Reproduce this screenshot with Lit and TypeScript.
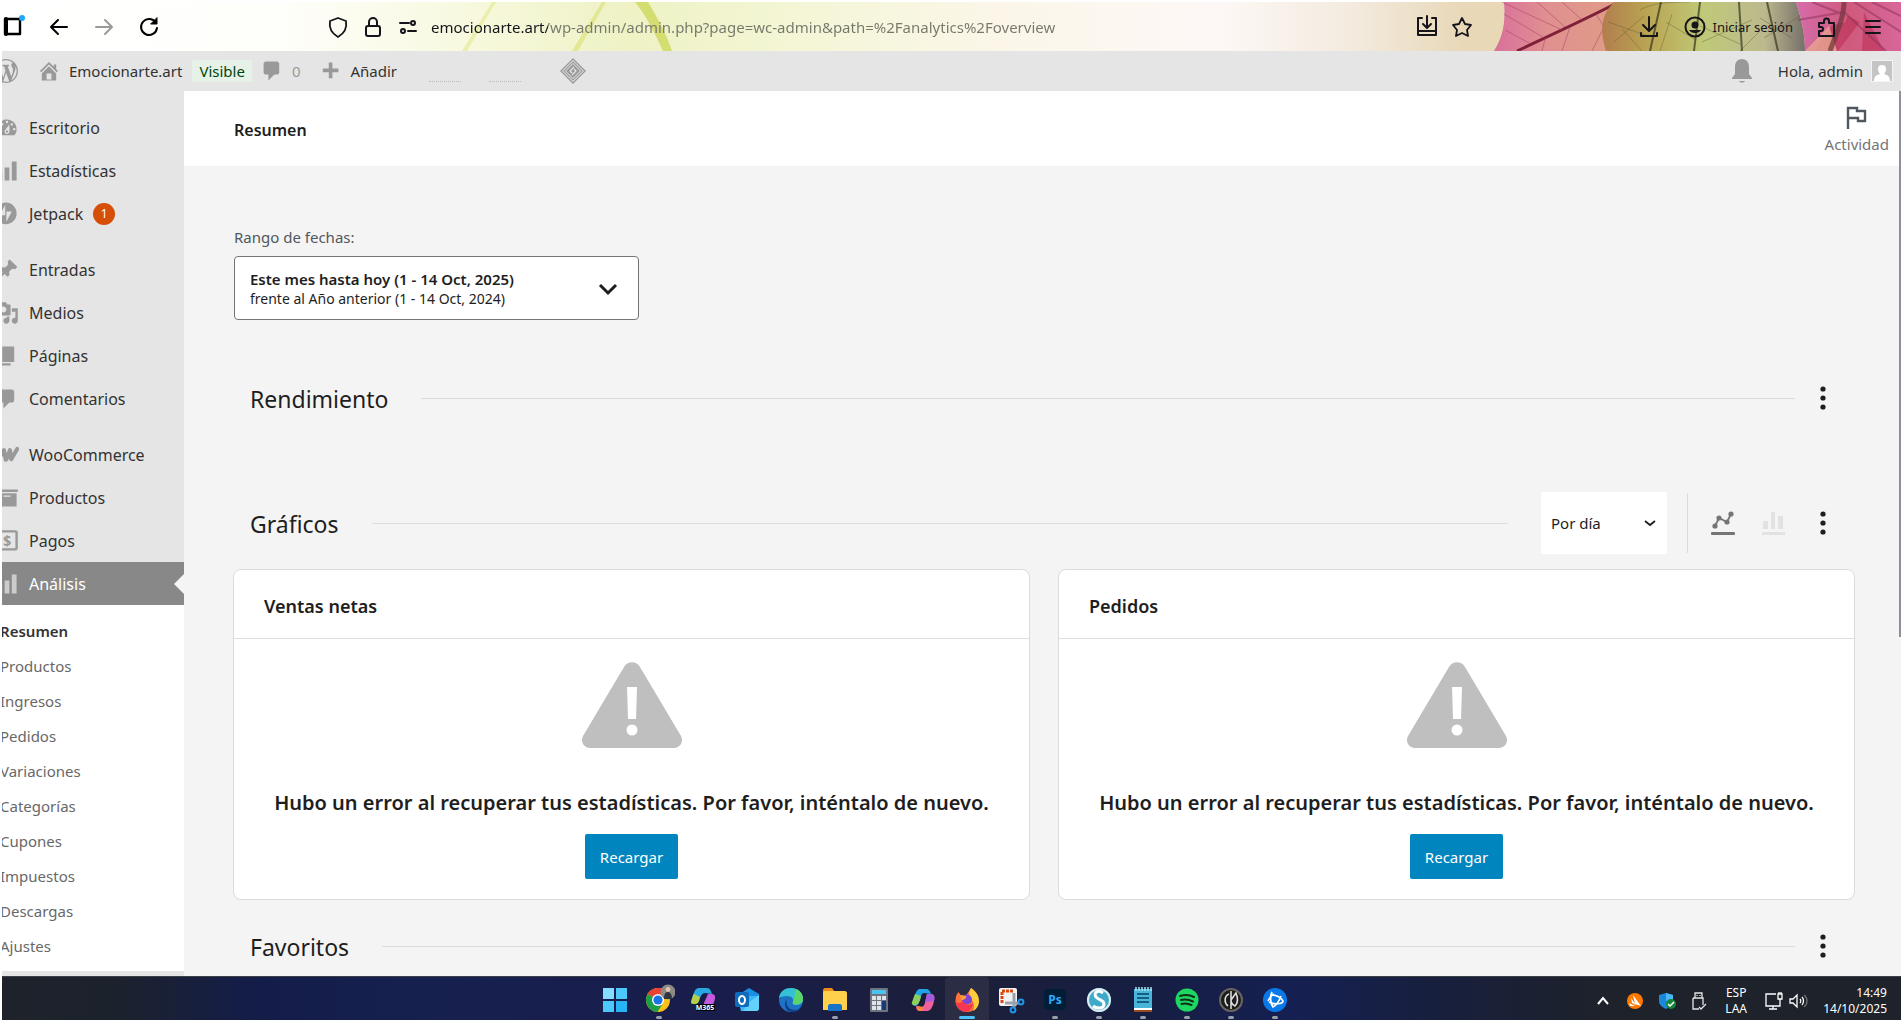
import { LitElement, html, svg, css } from 'lit';
import { customElement, property } from 'lit/decorators.js';
import { classMap } from 'lit/directives/class-map.js';

const base = css`
  * {
    box-sizing: border-box;
  }
  h1, h2, h3, p, ul {
    margin: 0;
    padding: 0;
    font-weight: 400;
  }
  ul {
    list-style: none;
  }
  button {
    border: none;
    background: none;
    padding: 0;
    font: inherit;
    color: inherit;
    cursor: pointer;
  }
  a {
    color: inherit;
    text-decoration: none;
  }
  svg {
    display: block;
    flex: none;
  }
`;

// 20x20 glyphs used by the admin bar and the side menu
const glyphs = {
  wordpress: svg`<path d="M20 10c0-5.51-4.49-10-10-10C4.48 0 0 4.49 0 10c0 5.52 4.48 10 10 10 5.51 0 10-4.48 10-10zM7.78 15.37L4.37 6.22c.55-.02 1.17-.08 1.17-.08.5-.06.44-1.13-.06-1.11 0 0-1.45.11-2.37.11-.18 0-.37 0-.58-.01C4.12 2.69 6.87 1.11 10 1.11c2.33 0 4.45.87 6.05 2.34-.68-.11-1.65.39-1.65 1.58 0 .74.45 1.36.9 2.1.35.61.55 1.36.55 2.46 0 1.49-1.4 5-1.4 5l-3.03-8.37c.54-.02.82-.17.82-.17.5-.05.44-1.25-.06-1.22 0 0-1.44.12-2.38.12-.87 0-2.33-.12-2.33-.12-.5-.03-.56 1.2-.06 1.22l.92.08 1.26 3.41zM17.41 10c.24-.64.74-1.87.43-4.25.7 1.29 1.05 2.71 1.05 4.25 0 3.29-1.73 6.24-4.4 7.78.97-2.59 1.94-5.2 2.92-7.78zM6.1 18.09C3.12 16.65 1.11 13.53 1.11 10c0-1.3.23-2.48.72-3.59C3.25 10.3 4.67 14.2 6.1 18.09zm4.03-6.63l2.58 6.98c-.86.29-1.76.45-2.71.45-.79 0-1.57-.11-2.29-.33.81-2.38 1.62-4.74 2.42-7.1z"/>`,
  home: svg`<path d="M16 8.5l1.53 1.53-1.06 1.06L10 4.6l-6.47 6.49-1.06-1.06L10 2.5l4 4v-2h2v4zm-6-2.46l6 5.99V18H4v-5.97zM12 17v-5H8v5h4z" fill-rule="evenodd"/>`,
  plus: svg`<path d="M17 8v3h-5v5H9v-5H4V8h5V3h3v5h5z"/>`,
  dashboard: svg`<path fill-rule="evenodd" d="M3.76 16h12.48c1.1-1.37 1.76-3.11 1.76-5 0-4.42-3.58-8-8-8s-8 3.58-8 8c0 1.89.66 3.63 1.76 5zM10 4c.55 0 1 .45 1 1s-.45 1-1 1-1-.45-1-1 .45-1 1-1zM6 6c.55 0 1 .45 1 1s-.45 1-1 1-1-.45-1-1 .45-1 1-1zm8 0c.55 0 1 .45 1 1s-.45 1-1 1-1-.45-1-1 .45-1 1-1zm-5.37 5.55L12 7v6c0 1.1-.9 2-2 2s-2-.9-2-2c0-.57.24-1.08.63-1.45zM4 10c.55 0 1 .45 1 1s-.45 1-1 1-1-.45-1-1 .45-1 1-1zm12 0c.55 0 1 .45 1 1s-.45 1-1 1-1-.45-1-1 .45-1 1-1zm-5 3c0-.55-.45-1-1-1s-1 .45-1 1 .45 1 1 1 1-.45 1-1z"/>`,
  stats: svg`<path d="M18 18V2h-4v16h4zm-6 0V7H8v11h4zm-6 0v-8H2v8h4z"/>`,
  jetpack: svg`<path fill-rule="evenodd" d="M9 0.500a9 9 0 1 0 0 18a9 9 0 0 0 0-18zM8.500 2.500V11H4zM9.500 16.500V8H14z"/>`,
  pin: svg`<path d="M10.44 3.02l1.82-1.82 6.36 6.35-1.83 1.82c-1.05-.68-2.48-.57-3.41.36l-.75.75c-.92.93-1.04 2.35-.35 3.41l-1.83 1.82-2.41-2.41-2.8 2.79c-.42.42-3.38 2.71-3.8 2.29s1.86-3.39 2.28-3.81l2.79-2.79L4.1 9.36l1.83-1.82c1.05.69 2.48.57 3.4-.36l.75-.75c.93-.92 1.05-2.35.36-3.41z"/>`,
  media: svg`<path fill-rule="evenodd" d="M13 11V4c0-.55-.45-1-1-1h-1.67L9 1H5L3.67 3H2c-.55 0-1 .45-1 1v7c0 .55.45 1 1 1h10c.55 0 1-.45 1-1zM7 4.5c1.38 0 2.5 1.12 2.5 2.5S8.38 9.5 7 9.5 4.5 8.38 4.5 7 5.62 4.5 7 4.5zM14 6h5v10.5c0 1.38-1.12 2.5-2.5 2.5S14 17.88 14 16.5s1.12-2.5 2.5-2.5c.17 0 .34.02.5.05V9h-3V6zm-4 8.05V13h2v3.5c0 1.38-1.12 2.5-2.5 2.5S7 17.88 7 16.5 8.12 14 9.5 14c.17 0 .34.02.5.05z"/>`,
  page: svg`<path d="M6 15V2h10v13H6zm-1 1h8v2H3V5h2v11z"/>`,
  comment: svg`<path d="M5 2h9c1.1 0 2 .9 2 2v7c0 1.1-.9 2-2 2h-2l-5 5v-5H5c-1.1 0-2-.9-2-2V4c0-1.1.9-2 2-2z"/>`,
  woo: svg`<path fill="none" stroke="currentColor" stroke-width="3.400" stroke-linecap="round" stroke-linejoin="round" d="M1 6l1.500 8L7.500 6l1.500 8M9.500 13.500L12.500 6l1 7.500L18.500 5"/>`,
  archive: svg`<path fill-rule="evenodd" d="M19 3v2H1V3h18zM2 6h16v11H2V6zm11 3V8H7v1h6z"/>`,
  money: svg`<rect x="-1" y="2" width="19" height="15" rx="1" fill="none" stroke="currentColor" stroke-width="2"/><text x="10" y="14" text-anchor="middle" font-size="12" font-weight="700">$</text>`,
};

const glyph = (name: string, size = 24) => html`
  <svg width=${size} height=${size} viewBox="0 0 20 20" fill="currentColor" aria-hidden="true">${glyphs[name]}</svg>
`;

@customElement('browser-bar')
class BrowserBar extends LitElement {
  static styles = [base, css`
    :host {
      display: flex;
      position: relative;
      align-items: center;
      height: 49px;
      flex: none;
      padding-right: 16px;
      color: #15141a;
      font-size: 13px;
    }
    .theme {
      position: absolute;
      inset: 0;
      width: 100%;
      height: 100%;
      z-index: -1;
    }
    .nav {
      display: flex;
      align-items: center;
      gap: 21px;
      flex: none;
      width: 324px;
    }
    .address {
      display: flex;
      align-items: center;
      gap: 11px;
      flex: 1;
    }
    .url {
      flex: 1;
      min-width: 0;
      border: none;
      outline: none;
      padding: 0;
      font: inherit;
      font-size: 15px;
      line-height: 24px;
      color: transparent;
      background: linear-gradient(to right, #15141a 117px, #77776c 117px);
      background-clip: text;
      -webkit-background-clip: text;
    }
    .actions {
      display: flex;
      align-items: center;
      gap: 11px;
      margin-right: 163px;
    }
    .tools {
      display: flex;
      align-items: center;
      gap: 22px;
    }
    .account {
      display: flex;
      align-items: center;
      gap: 6px;
      white-space: nowrap;
    }
  `];

  icon(body, stroke = '#15141a') {
    return html`<svg width="24" height="24" viewBox="0 0 24 24" fill="none" stroke=${stroke} stroke-width="2" stroke-linecap="round" stroke-linejoin="round">${body}</svg>`;
  }

  render() {
    return html`
      <svg class="theme" viewBox="0 0 1899 49" preserveAspectRatio="none" aria-hidden="true">
        <defs>
          <linearGradient id="sky">
            <stop offset="0" stop-color="#fff"/>
            <stop offset=".15" stop-color="#fefefa"/>
            <stop offset=".24" stop-color="#f8f9e0"/>
            <stop offset=".33" stop-color="#eef2c4"/>
            <stop offset=".42" stop-color="#f4f6d6"/>
            <stop offset=".52" stop-color="#fbf6e8"/>
            <stop offset=".64" stop-color="#fdf8f6"/>
            <stop offset=".71" stop-color="#f4ebdf"/>
            <stop offset=".77" stop-color="#e8d8b8"/>
            <stop offset="1" stop-color="#e8d8a0"/>
          </linearGradient>
          <linearGradient id="rose">
            <stop offset="0" stop-color="#d9709c"/>
            <stop offset=".35" stop-color="#e09090"/>
            <stop offset="1" stop-color="#dfa182"/>
          </linearGradient>
          <linearGradient id="moss">
            <stop offset="0" stop-color="#b27d4e"/>
            <stop offset=".22" stop-color="#b9a452"/>
            <stop offset=".5" stop-color="#c0c978"/>
            <stop offset=".8" stop-color="#bcb98e"/>
            <stop offset="1" stop-color="#77706a"/>
          </linearGradient>
          <linearGradient id="pink">
            <stop offset="0" stop-color="#d56cab"/>
            <stop offset=".5" stop-color="#cf5a7c"/>
            <stop offset="1" stop-color="#d8669a"/>
          </linearGradient>
        </defs>
        <rect width="1899" height="49" fill="url(#sky)"/>
        <path d="M633 0c14 18 20 32 28 49h9c-6-18-14-32-24-49z" fill="#c9d44c" opacity=".7"/>
        <path d="M600 0l-30 49h6l28-49z" fill="#d3db5c" opacity=".5"/>
        <path d="M490 0l-30 49h5l29-49z" fill="#dfe67c" opacity=".5"/>
        <path d="M1502 0c2 22-2 36-10 49h130l20-49z" fill="url(#rose)"/>
        <path d="M1617 0c-35 18-70 34-102 49" fill="none" stroke="#7e2138" stroke-width="3"/>
        <path d="M1502 12l42 25M1503 28l24 13M1560 0l20 18M1535 0l28 25M1590 49l20-40M1560 49l8-24M1540 49l3-12M1594 12l20 32M1500 0l60 28" fill="none" stroke="#a83c6e" stroke-width="1" opacity=".5"/>
        <path d="M1612 0c-14 14-14 30-8 49h199c0-18-4-34-9-49z" fill="url(#moss)"/>
        <path d="M1638 8c10-6 24-8 50-8M1606 20l40 14M1612 40l30-26M1670 12l-12 37M1664 20l30 18M1698 24l40 18M1758 16l32 20M1762 36l36-22M1738 49l20-20M1700 40l50-22M1640 49l-20-22" fill="none" stroke="#5c5a30" stroke-width="1" opacity=".4"/>
        <path d="M1659 0l-11 49M1698 0l-6 49M1737 0l3 49M1765 0l11 49" fill="none" stroke="#36351e" stroke-width="2" opacity=".7"/>
        <path d="M1794 0c5 15 9 31 9 49h96V0z" fill="url(#pink)"/>
        <path d="M1812 49l18-26 20-4-18 30zM1862 10l20 39h-22zM1846 14l12 6-22 29h-8z" fill="#b8264c" opacity=".5"/>
        <path d="M1803 49l24-25 8 25z" fill="#e7a690" opacity=".8"/>
        <path d="M1842 0c0 16-8 32-14 49" fill="none" stroke="#6e3538" stroke-width="5" opacity=".7"/>
        <path d="M1796 18l46-8 42 39M1852 0l47 30M1870 0l29 14M1810 0l30 12" fill="none" stroke="#883058" stroke-width="2" opacity=".5"/>
      </svg>

      <div class="nav">
        <button aria-label="Barra lateral">${this.icon(svg`<path d="M3 4h15v15H3z" stroke-width="2.400"/><path d="M4 4v15" stroke-width="4"/><circle cx="20" cy="3" r="3" fill="#1fa8f5" stroke="none"/>`, '#000')}</button>
        <button aria-label="Atrás">${this.icon(svg`<path d="M20 12H4M11 5l-7 7 7 7"/>`, '#000')}</button>
        <button aria-label="Adelante">${this.icon(svg`<path d="M4 12h16M13 5l7 7-7 7"/>`, '#9a9a9a')}</button>
        <button aria-label="Recargar página">${this.icon(svg`<path d="M19 8a8 8 0 1 0 1 5"/><path d="M20 3v6h-6z" fill="#000" stroke-width="1"/>`, '#000')}</button>
      </div>

      <div class="address">
        ${this.icon(svg`<path d="M12 3l8 3c1 6-1 12-8 16C5 18 3 12 4 6z" stroke-width="1.800"/>`)}
        ${this.icon(svg`<rect x="5" y="11" width="14" height="10" rx="2"/><path d="M8 11V7a4 4 0 0 1 8 0v4"/>`)}
        ${this.icon(svg`<path d="M4 8h9M12 16h8"/><circle cx="17" cy="8" r="2"/><circle cx="7" cy="16" r="2"/>`)}
        <input class="url" aria-label="Dirección" .value=${'emocionarte.art/wp-admin/admin.php?page=wc-admin&path=%2Fanalytics%2Foverview'}>
      </div>

      <div class="actions">
        <button aria-label="Instalar">${this.icon(svg`<path d="M7 3H3v17h18V3h-4M3 16h18M12 1v11M8 9l4 4 4-4"/>`)}</button>
        <button aria-label="Marcador">${this.icon(svg`<path d="M12 3l3 6 6 1-4 5 1 6-6-3-6 3 1-6-4-5 6-1z" stroke-width="1.800"/>`)}</button>
      </div>

      <div class="tools">
        <button aria-label="Descargas">${this.icon(svg`<path d="M12 2v13M6 10l6 6 6-6M4 18v3h16v-3"/>`)}</button>
        <button class="account">
          ${this.icon(svg`<circle cx="12" cy="12" r="9.500"/><circle cx="12" cy="10" r="3.500" fill="#15141a" stroke="none"/><path d="M6 15h12c-2 4-10 4-12 0z" fill="#15141a" stroke="none"/>`)}
          Iniciar sesión
        </button>
        <button aria-label="Extensiones">${this.icon(svg`<path d="M4 21v-5h2a2 2 0 0 0 0-4H4V8h5V6a2 2 0 0 1 5 0v2h5v13z"/>`)}</button>
        <button aria-label="Menú">${this.icon(svg`<path d="M5 6h14M5 12h14M5 18h14"/>`)}</button>
      </div>
    `;
  }
}

@customElement('admin-bar')
class AdminBar extends LitElement {
  static styles = [base, css`
    :host {
      display: flex;
      align-items: center;
      height: 40px;
      flex: none;
      padding-right: 8px;
      background: #e5e5e5;
      color: #333;
      font-size: 15px;
      white-space: nowrap;
      overflow: hidden;
    }
    .glyph {
      color: #999;
    }
    .logo {
      margin-left: -8px;
      margin-right: 19px;
    }
    .item {
      display: flex;
      align-items: center;
      gap: 8px;
    }
    .badge {
      margin: 0 8px 0 10px;
      padding: 0 7px;
      border-radius: 2px;
      background: #e6f2e8;
      color: #00450c;
      line-height: 22px;
    }
    .count {
      color: #999;
    }
    .add {
      margin-left: 18px;
    }
    .dots {
      display: flex;
      gap: 28px;
      margin-left: 32px;
      padding-top: 20px;
    }
    .dot-row {
      width: 32px;
      border-top: 1px dotted #bbb;
    }
    .diamond {
      margin-left: 39px;
    }
    .right {
      display: flex;
      align-items: center;
      gap: 8px;
      margin-left: auto;
    }
    .bell {
      margin-right: 16px;
    }
  `];

  render() {
    return html`
      <a class="glyph logo" href="#" aria-label="WordPress">${glyph('wordpress')}</a>
      <a class="item" href="#"><span class="glyph">${glyph('home')}</span>Emocionarte.art</a>
      <span class="badge">Visible</span>
      <a class="item" href="#"><span class="glyph">${glyph('comment')}</span><span class="count">0</span></a>
      <a class="item add" href="#"><span class="glyph">${glyph('plus')}</span>Añadir</a>
      <span class="dots"><i class="dot-row"></i><i class="dot-row"></i></span>
      <a class="diamond" href="#" aria-label="Caché">
        <svg width="26" height="26" viewBox="0 0 26 26" fill="none" stroke="#999">
          <path d="M13 1l12 12-12 12L1 13z" stroke-width="1.400"/>
          <path d="M13 4l9 9-9 9-9-9z" stroke-width="1.200"/>
          <path d="M13 6l7 7-7 7-7-7z" fill="#999" stroke="none"/>
          <path d="M14 9l-4 4 2 2M12 17l4-4-2-2" stroke="#e5e5e5" stroke-width="1.200"/>
        </svg>
      </a>
      <div class="right">
        <button class="bell" aria-label="Notificaciones">
          <svg width="24" height="26" viewBox="0 0 24 26" fill="#999">
            <path d="M12 1c5 0 7 4 7 8v7l3 4v1H2v-1l3-4V9c0-4 2-8 7-8zM9 23h6c-1 2-5 2-6 0z"/>
          </svg>
        </button>
        Hola, admin
        <svg width="22" height="22" viewBox="0 0 22 22">
          <path d="M0 0h22v22H0z" fill="#f4f4f4"/>
          <path d="M1 1h20v20H1z" fill="#c4c4c4"/>
          <path d="M11 5a4 4 0 0 1 4 4c0 2-1 4-2 5 3 1 6 2 6 7H3c0-5 3-6 6-7-1-1-2-3-2-5a4 4 0 0 1 4-4z" fill="#fff"/>
        </svg>
      </div>
    `;
  }
}

@customElement('admin-menu')
class AdminMenu extends LitElement {
  static styles = [base, css`
    :host {
      display: block;
      flex: none;
      width: 199px;
      margin-left: -17px;
      padding-top: 15px;
      background: #e5e5e5;
      color: #333;
      font-size: 16px;
    }
    .group {
      margin-bottom: 13px;
    }
    .group.last {
      margin-bottom: 0;
    }
    .link {
      display: flex;
      align-items: center;
      gap: 10px;
      height: 43px;
      padding-left: 10px;
    }
    .glyph {
      color: #999;
    }
    .current {
      background: #888;
      color: #fff;
    }
    .current .glyph {
      color: #ccc;
    }
    .current::after {
      content: '';
      margin-left: auto;
      border: 10px solid transparent;
      border-left-width: 0;
      border-right-color: #f4f4f4;
    }
    .count {
      width: 22px;
      border-radius: 11px;
      background: #d64e07;
      color: #fff;
      font-size: 12px;
      line-height: 22px;
      text-align: center;
    }
    .sub {
      padding: 9px 0 7px 15px;
      background: #fff;
      color: #686868;
      font-size: 15px;
      line-height: 35px;
    }
    .sub .active {
      color: #333;
      font-weight: 600;
    }
  `];

  groups = [
    [
      { icon: 'dashboard', label: 'Escritorio' },
      { icon: 'stats', label: 'Estadísticas' },
      { icon: 'jetpack', label: 'Jetpack', count: 1 },
    ],
    [
      { icon: 'pin', label: 'Entradas' },
      { icon: 'media', label: 'Medios' },
      { icon: 'page', label: 'Páginas' },
      { icon: 'comment', label: 'Comentarios' },
    ],
    [
      { icon: 'woo', label: 'WooCommerce' },
      { icon: 'archive', label: 'Productos' },
      { icon: 'money', label: 'Pagos' },
      { icon: 'stats', label: 'Análisis', current: true },
    ],
  ];

  submenu = ['Resumen', 'Productos', 'Ingresos', 'Pedidos', 'Variaciones', 'Categorías', 'Cupones', 'Impuestos', 'Descargas', 'Ajustes'];

  render() {
    return html`
      ${this.groups.map((group: any[], i) => html`
        <ul class=${classMap({ group: true, last: i === this.groups.length - 1 })}>
          ${group.map(item => html`
            <li>
              <a class=${classMap({ link: true, current: !!item.current })} href="#">
                <span class="glyph">${glyph(item.icon)}</span>
                ${item.label}
                ${item.count ? html`<span class="count">${item.count}</span>` : ''}
              </a>
            </li>
          `)}
        </ul>
      `)}
      <ul class="sub">
        ${this.submenu.map((label, i) => html`<li><a class=${i === 0 ? 'active' : ''} href="#">${label}</a></li>`)}
      </ul>
    `;
  }
}

@customElement('chart-card')
class ChartCard extends LitElement {
  static styles = [base, css`
    :host {
      display: block;
      border: 1px solid #dcdcdc;
      border-radius: 8px;
      background: #fff;
      color: #1e1e1e;
    }
    .title {
      padding: 24px 30px 20px;
      border-bottom: 1px solid #e0e0e0;
      font-size: 18px;
      font-weight: 600;
      line-height: 24px;
    }
    .body {
      display: flex;
      flex-direction: column;
      align-items: center;
      padding: 23px 20px 20px;
    }
    .message {
      margin: 41px 0 17px;
      font-size: 20px;
      font-weight: 600;
      line-height: 28px;
      text-align: center;
    }
    .reload {
      height: 45px;
      padding: 0 15px;
      border-radius: 2px;
      background: #0085be;
      color: #fff;
      font-size: 15px;
    }
  `];

  @property() label = '';

  render() {
    return html`
      <h3 class="title">${this.label}</h3>
      <div class="body">
        <svg width="100" height="86" viewBox="0 0 100 86" aria-hidden="true">
          <path d="M42 5c3-6.500 13-6.500 16 0l41 69c3 6-1 12-8 12H9c-7 0-11-6-8-12z" fill="#bfbfbf"/>
          <path d="M45 25h10l-1 32h-8z" fill="#fff"/>
          <circle cx="50" cy="68" r="5.500" fill="#fff"/>
        </svg>
        <p class="message">Hubo un error al recuperar tus estadísticas. Por favor, inténtalo de nuevo.</p>
        <button class="reload">Recargar</button>
      </div>
    `;
  }
}

@customElement('overview-page')
class OverviewPage extends LitElement {
  static styles = [base, css`
    :host {
      display: block;
      position: relative;
      flex: 1;
      min-width: 0;
      overflow: hidden;
      background: #f4f4f4;
      color: #1e1e1e;
    }
    .header {
      display: flex;
      align-items: center;
      justify-content: space-between;
      height: 75px;
      padding: 2px 12px 0 50px;
      background: #fff;
    }
    .header h1 {
      font-size: 16px;
      font-weight: 600;
    }
    .activity {
      display: flex;
      flex-direction: column;
      align-items: center;
      gap: 4px;
      color: #757575;
      font-size: 15px;
      line-height: 22px;
    }
    .content {
      padding: 59px 46px 0 49px;
    }
    .filter {
      padding-left: 1px;
    }
    .filter-label {
      margin-bottom: 7px;
      color: #50575e;
      font-size: 15px;
      line-height: 24px;
    }
    .range {
      display: flex;
      align-items: center;
      justify-content: space-between;
      width: 405px;
      height: 64px;
      padding: 2px 18px 0 15px;
      border: 1px solid #757575;
      border-radius: 4px;
      background: #fff;
      font-size: 14px;
      line-height: 20px;
      text-align: left;
    }
    .range strong {
      display: block;
      font-size: 15px;
      font-weight: 600;
    }
    .section {
      display: flex;
      align-items: center;
      height: 62px;
      padding: 0 7px 0 17px;
    }
    .section h2 {
      padding-top: 2px;
      font-size: 23px;
      line-height: 32px;
    }
    .section hr {
      flex: 1;
      height: 1px;
      margin: 0 3px 0 33px;
      border: none;
      background: #dcdcdc;
    }
    .performance {
      margin-top: 47px;
    }
    .charts {
      margin-top: 63px;
    }
    .charts hr {
      margin-right: 33px;
    }
    .interval {
      display: grid;
      align-items: center;
      width: 126px;
      height: 62px;
      margin-right: 20px;
    }
    .interval > * {
      grid-area: 1 / 1;
    }
    .interval select {
      height: 100%;
      padding: 0 10px;
      border: none;
      border-radius: 2px;
      appearance: none;
      background: #fff;
      color: inherit;
      font: inherit;
      font-size: 15px;
    }
    .interval svg {
      justify-self: end;
      margin-right: 11px;
      pointer-events: none;
    }
    .types {
      display: flex;
      align-items: center;
      height: 60px;
      padding-left: 10px;
      border-left: 1px solid #dcdcdc;
    }
    .icon-button {
      display: flex;
      justify-content: center;
      width: 50px;
    }
    .cards {
      display: grid;
      grid-template-columns: 1fr 1fr;
      gap: 28px;
      margin: 15px 0;
    }
    .scrollbar {
      position: absolute;
      right: 0;
      top: 0;
      width: 2px;
      height: 546px;
      background: #8f8f9a;
    }
  `];

  menuButton(label: string) {
    return html`
      <button class="icon-button" aria-label=${label}>
        <svg width="24" height="24" viewBox="0 0 24 24" fill="#1e1e1e">
          <circle cx="12" cy="3" r="2.600"/><circle cx="12" cy="12" r="2.600"/><circle cx="12" cy="21" r="2.600"/>
        </svg>
      </button>
    `;
  }

  render() {
    return html`
      <header class="header">
        <h1>Resumen</h1>
        <button class="activity">
          <svg width="22" height="24" viewBox="0 0 22 24" fill="none" stroke="#50575e" stroke-width="2.400">
            <path d="M2 24V3h9v3h8v10h-7v-3H2"/>
          </svg>
          Actividad
        </button>
      </header>

      <div class="content">
        <div class="filter">
          <p class="filter-label" id="range-label">Rango de fechas:</p>
          <button class="range" aria-describedby="range-label">
            <span>
              <strong>Este mes hasta hoy (1 - 14 Oct, 2025)</strong>
              frente al Año anterior (1 - 14 Oct, 2024)
            </span>
            <svg width="24" height="24" viewBox="0 0 24 24" fill="none" stroke="#1e1e1e" stroke-width="3">
              <path d="M4 8l8 8 8-8"/>
            </svg>
          </button>
        </div>

        <div class="section performance">
          <h2>Rendimiento</h2>
          <hr>
          ${this.menuButton('Opciones de rendimiento')}
        </div>

        <div class="section charts">
          <h2>Gráficos</h2>
          <hr>
          <div class="interval">
            <select aria-label="Intervalo">
              <option>Por día</option>
              <option>Por semana</option>
              <option>Por mes</option>
            </select>
            <svg width="12" height="8" viewBox="0 0 12 8" fill="none" stroke="#1e1e1e" stroke-width="1.800">
              <path d="M1 2l5 4 5-4"/>
            </svg>
          </div>
          <div class="types">
            <button class="icon-button" aria-label="Gráfico de líneas">
              <svg width="24" height="24" viewBox="0 0 24 24" fill="#757575" stroke="#757575">
                <path d="M4 15l4-8 8 4 4-8" fill="none" stroke-width="1.800"/>
                <g stroke="none">
                  <circle cx="4" cy="15" r="2.600"/><circle cx="8" cy="7" r="2.600"/><circle cx="16" cy="11" r="2.600"/><circle cx="20" cy="3" r="2.600"/>
                  <rect x="0" y="21" width="24" height="3" rx="1"/>
                </g>
              </svg>
            </button>
            <button class="icon-button" aria-label="Gráfico de barras">
              <svg width="24" height="24" viewBox="0 0 24 24" fill="#e2e2e2">
                <path d="M2 10h5v8H2zM10 1h4v17h-4zM17 5h5v13h-5zM1 21h23v3H1z"/>
              </svg>
            </button>
          </div>
          ${this.menuButton('Opciones de gráficos')}
        </div>

        <div class="cards">
          <chart-card label="Ventas netas"></chart-card>
          <chart-card label="Pedidos"></chart-card>
        </div>

        <div class="section">
          <h2>Favoritos</h2>
          <hr>
          ${this.menuButton('Opciones de favoritos')}
        </div>
      </div>
      <div class="scrollbar"></div>
    `;
  }
}

@customElement('task-bar')
class TaskBar extends LitElement {
  static styles = [base, css`
    :host {
      display: grid;
      grid-template-columns: 1fr auto 1fr;
      align-items: center;
      box-sizing: border-box;
      height: 44px;
      flex: none;
      padding-right: 14px;
      border-top: 1px solid #3c4148;
      background: linear-gradient(to right, #1e232b 0, #1c222c 6%, #141d48 13%, #16204f 22%, #191d4b 38%, #1c1f38 50%, #161e42 60%, #152052 68%, #181f3c 76%, #1d222b 84%);
      color: #fff;
      font-size: 12px;
      line-height: 16px;
    }
    .apps {
      display: flex;
      grid-column: 2;
    }
    .app {
      display: grid;
      justify-items: center;
      align-content: end;
      width: 44px;
      height: 43px;
      padding-bottom: 1px;
    }
    .app::after {
      content: '';
      width: 6px;
      height: 3px;
      border-radius: 2px;
    }
    .running::after {
      background: #9a9ea8;
    }
    .focused {
      border-radius: 4px 4px 0 0;
      background: #2b2d44;
    }
    .focused::after {
      width: 16px;
      background: #4cc2ff;
    }
    .tray {
      display: flex;
      align-items: center;
      justify-content: flex-end;
      padding-top: 4px;
    }
    .tray > svg {
      margin-right: 8px;
    }
    .tray .status {
      margin-right: 4px;
    }
    .language {
      width: 30px;
      margin: 0 13px 0 2px;
      text-align: center;
    }
    .clock {
      margin-left: 11px;
      text-align: right;
    }
  `];

  apps = [
    { name: 'Inicio', art: svg`<g fill="#4cc8fb"><path d="M4 4h11v11H4z" fill="#86dcff"/><path d="M17 4h11v11H17z"/><path d="M4 17h11v11H4z"/><path d="M17 17h11v11H17z" fill="#27b4f6"/></g>` },
    { name: 'Chrome', running: true, art: svg`<circle cx="15" cy="16" r="12" fill="#fbc116"/><path d="M15 16L4.600 10A12 12 0 0 1 26 11z" fill="#e94235"/><path d="M15 16L4.600 10A12 12 0 0 0 14.500 28l5-8z" fill="#1e9d4b"/><circle cx="15" cy="16" r="6" fill="#fff"/><circle cx="15" cy="16" r="4.600" fill="#1a73e8"/><circle cx="25" cy="8" r="7.500" fill="#8d8a86"/><path d="M21 15c0-6 2-7 4-7s4 2 4 7z" fill="#30353f"/><circle cx="25" cy="5.500" r="2.400" fill="#dcc5b2"/>` },
    { name: 'Microsoft 365', art: svg`<path d="M4 18c2-6 3-13 7-14h9c3 0 4 3 5 6l-7-1c-3 0-4 3-6 7-1 4-3 4-4 4s-4 0-4-2z" fill="#28a8e0"/><path d="M4 18c1-4 2-7 3-8l6 3c-1 5-2 7-5 7-2 0-4 0-4-2z" fill="#b4cf4b"/><path d="M17 19l4-9h4c3 0 4 3 2 8s-3 5-5 5h-5z" fill="#c65be0"/><path d="M9 20h19v7H9z" fill="#000"/><text x="18" y="26" text-anchor="middle" font-size="7" font-weight="700" fill="#fff">M365</text>` },
    { name: 'Outlook', art: svg`<path d="M7 11L18 4l10 6v14c0 2-1 3-3 3H10z" fill="#1a8fe3"/><path d="M7 12h21v12c0 2-1 3-3 3H10z" fill="#3cb6f5"/><path d="M17 19l11-8v12c0 2-1 4-3 4H12z" fill="#62d2fa"/><rect x="4" y="8" width="14" height="15" rx="2" fill="#0f6cbd"/><ellipse cx="11" cy="16" rx="3" ry="4" fill="none" stroke="#fff" stroke-width="2"/>` },
    { name: 'Edge', art: svg`<circle cx="16" cy="16" r="12" fill="#1c72c4"/><path d="M4 14C5 7 10 4 16 4c8 0 12 6 12 11 0 4-3 6-7 6-3 0-4-1-3-3 1-3-1-6-6-6-4 0-7 1-8 2z" fill="#35c1d5"/><path d="M21 5c5 2 7 6 7 10 0 4-4 5.500-7 5.500-3 0-4-1-3-3 2-4 2-9 3-12.500z" fill="#5bd56b"/><path d="M12 15c-2 6 2 11 8 11 3 0 5-1 6-2-2 3-5 4-9 4-7 0-9-9-5-13z" fill="#123f86"/>` },
    { name: 'Explorador', running: true, art: svg`<path d="M4 6c0-1 1-2 2-2h7l3 4H4z" fill="#f08b1b"/><path d="M4 9c0-1 0-2 2-2h20c1 0 2 1 2 2v17H4z" fill="#ffd04c"/><path d="M9 27v-5c0-1 1-2 2-2h10c1 0 2 1 2 2v5z" fill="#1574c9"/>` },
    { name: 'Calculadora', art: svg`<rect x="7" y="4" width="18" height="24" rx="1" fill="#6d7480"/><path d="M9 6h14v4H9z" fill="#4cc2f1"/><path d="M9 12h4v4H9zM14 12h4v4h-4zM19 12h4v4h-4zM9 17h4v4H9zM14 17h4v4h-4zM9 22h4v4H9zM14 22h4v4h-4z" fill="#dfe3e8"/><path d="M19 17h4v9h-4z" fill="#173a78"/>` },
    { name: 'Copilot', art: svg`<path d="M6 18c1-5 3-12 6-13h7c3 0 4 2 5 5l-7-1c-3 0-3 5-5 9-1 3-2 4-4 4s-3-2-2-4z" fill="#23a3e6"/><path d="M5 18l3-8 6 2c-1 5-2 8-5 9s-5-1-4-3z" fill="#8ccf5a"/><path d="M20 10h4c3 0 4 3 3 7-1 5-3 10-7 10h-7c-2 0-4-1-4-5l6 1c3 0 4-9 5-13z" fill="#f0609a"/><path d="M20 10h4c3 0 4 3 3 7l-9 1z" fill="#a55be0"/><path d="M10 22l7 1-2 4h-2c-2 0-4-2-3-5z" fill="#f7843c"/>` },
    { name: 'Firefox', focused: true, art: svg`<path d="M16 28C9 28 4.500 23 4.500 17c0-4 1-7 3-9l2 3 5 1 6-8c4 3 7 7 7 13 0 6-5 11-11.500 11z" fill="#ff7139"/><path d="M20 4c5 4 8 7 8 13 0 4-2 8-6 10 2-4 1-8-1-11-3-3-4-7-1-12z" fill="#ffcb3d"/><circle cx="16" cy="15.500" r="5" fill="#7a44d6"/><path d="M5 18c2 2 5 1 7-1 2 5 6 5 10 2-1 6-4 9-8 9-5-1-9-5-9-10z" fill="#f4364f"/><path d="M9 11l6 1c1 1 0 3-3 4-2 1-3-3-3-5z" fill="#ff9a3a"/>` },
    { name: 'Recortes', art: svg`<rect x="4" y="4" width="18" height="18" rx="2" fill="#f2f2f2"/><path d="M7 19V7h12" fill="none" stroke="#d9480f" stroke-width="3" stroke-dasharray="3 1"/><path d="M10 19h14M19 9v14" stroke="#9aa3ad" stroke-width="3"/><circle cx="26" cy="18" r="2.400" fill="none" stroke="#2196e8" stroke-width="2"/><circle cx="18" cy="26" r="2.400" fill="none" stroke="#2196e8" stroke-width="2"/>` },
    { name: 'Photoshop', running: true, art: svg`<rect x="5" y="5" width="22" height="21" rx="4" fill="#001e36"/><text x="16" y="20" text-anchor="middle" font-size="12" font-weight="700" fill="#31a8ff">Ps</text>` },
    { name: 'Simplenote', running: true, art: svg`<circle cx="16" cy="16" r="12" fill="#3fa9c9"/><circle cx="16" cy="16" r="11" fill="none" stroke="#dcebf0" stroke-width="2"/><path d="M20 9c-5-4-10 0-7 4 2 3 8 3 8 7 0 5-7 5-11 2" fill="none" stroke="#fff" stroke-width="3"/>` },
    { name: 'Bloc de notas', running: true, art: svg`<path d="M7 5h18v19H7z" fill="#49b5d8"/><path d="M9 3v4M12 3v4M15 3v4M18 3v4M21 3v4M24 3v4" stroke="#a5e3f5" stroke-width="1.500"/><path d="M10 10h12M10 14h12M10 18h12" stroke="#155f85" stroke-width="1.800"/><path d="M7 24h18v2H7z" fill="#fff"/><path d="M7 26h18v2H7z" fill="#9a4a22"/>` },
    { name: 'Spotify', running: true, art: svg`<circle cx="16" cy="16" r="11.500" fill="#1ed760"/><path d="M9 12c5-1.500 10-1 14 1M10 16c4-1 8-.5 12 1.500M10.500 20c3-1 7-.5 10 1" fill="none" stroke="#10301b" stroke-width="2" stroke-linecap="round"/>` },
    { name: 'Editor', running: true, art: svg`<circle cx="16" cy="16" r="11" fill="#1c1c1c" stroke="#6b6560" stroke-width="2"/><path d="M16 7v18M14 10c-5 2-5 9-1 12M21 9l-5 7c0 3 2 5 4 6 3-3 3-8 1-13z" fill="none" stroke="#dcdcdc" stroke-width="1.600"/>` },
    { name: 'Battle.net', running: true, art: svg`<circle cx="16" cy="16" r="12" fill="#0a78e6"/><path d="M12 11c4-1 11 3 12 6 0 3-9 4-14 1M13 8c-2 4-2 11 1 15 3-1 6-6 8-11M9 17c2-4 4-6 6-7" fill="none" stroke="#fff" stroke-width="1.700"/>` },
  ];

  render() {
    return html`
      <nav class="apps">
        ${this.apps.map(app => html`
          <button class=${classMap({ app: true, running: !!app.running, focused: !!app.focused })} aria-label=${app.name}>
            <svg width="32" height="32" viewBox="0 0 32 32">${app.art}</svg>
          </button>
        `)}
      </nav>
      <div class="tray">
        <svg width="24" height="24" viewBox="0 0 24 24" fill="none" stroke="#fff" stroke-width="2"><path d="M7 15l5-6 5 6"/></svg>
        <svg width="24" height="24" viewBox="0 0 24 24"><circle cx="12" cy="12" r="8" fill="#ff7800"/><path d="M10 6l8 11-6-2zM8 9l5 7-4-2zM6 14l6 3H7z" fill="#fff"/></svg>
        <svg width="24" height="24" viewBox="0 0 24 24"><path d="M11 4l7 2v6c0 4-3 6-7 8-4-2-7-4-7-8V6z" fill="#1a86dc"/><path d="M11 4l7 2v6h-7z" fill="#4bb8f5"/><circle cx="16" cy="15" r="5" fill="#13863c"/><path d="M13 15l2 2 4-4" fill="none" stroke="#fff" stroke-width="1.500"/></svg>
        <svg width="24" height="24" viewBox="0 0 24 24" fill="none" stroke="#e6e6e6" stroke-width="1.300"><path d="M8 9V4h7v5M6 9h10v7M6 9v11h6M10 6v1M13 6v1M12 18l2 2 5-5"/></svg>
        <button class="language">ESP<br>LAA</button>
        <svg class="status" width="20" height="20" viewBox="0 0 20 20" fill="none" stroke="#fff" stroke-width="1.300"><path d="M12 3H2v12h14v-5M9 15v3M5 18h8M14 3h4v5h-4zM16 8v4M15 1v2M17 1v2"/></svg>
        <svg class="status" width="20" height="20" viewBox="0 0 20 20" fill="none" stroke="#fff" stroke-width="1.300"><path d="M2 8h3l4-4v12l-4-4H2zM12 8c1 1 1 3 0 4M14 6c2 2 2 6 0 8"/><path d="M16 4c4 3 4 9 0 12" stroke="#6a6e75"/></svg>
        <button class="clock">14:49<br>14/10/2025</button>
      </div>
    `;
  }
}

@customElement('app-root')
class AppRoot extends LitElement {
  static styles = css`
    :host {
      display: flex;
      flex-direction: column;
      box-sizing: border-box;
      height: 100vh;
      padding: 2px;
      overflow: hidden;
      isolation: isolate;
      background: #fff;
      font-family: 'Noto Sans', 'Open Sans', sans-serif;
    }
    .body {
      display: flex;
      flex: 1;
      min-height: 0;
      overflow: hidden;
    }
  `;

  render() {
    return html`
      <browser-bar></browser-bar>
      <admin-bar></admin-bar>
      <div class="body">
        <admin-menu></admin-menu>
        <overview-page></overview-page>
      </div>
      <task-bar></task-bar>
    `;
  }
}
